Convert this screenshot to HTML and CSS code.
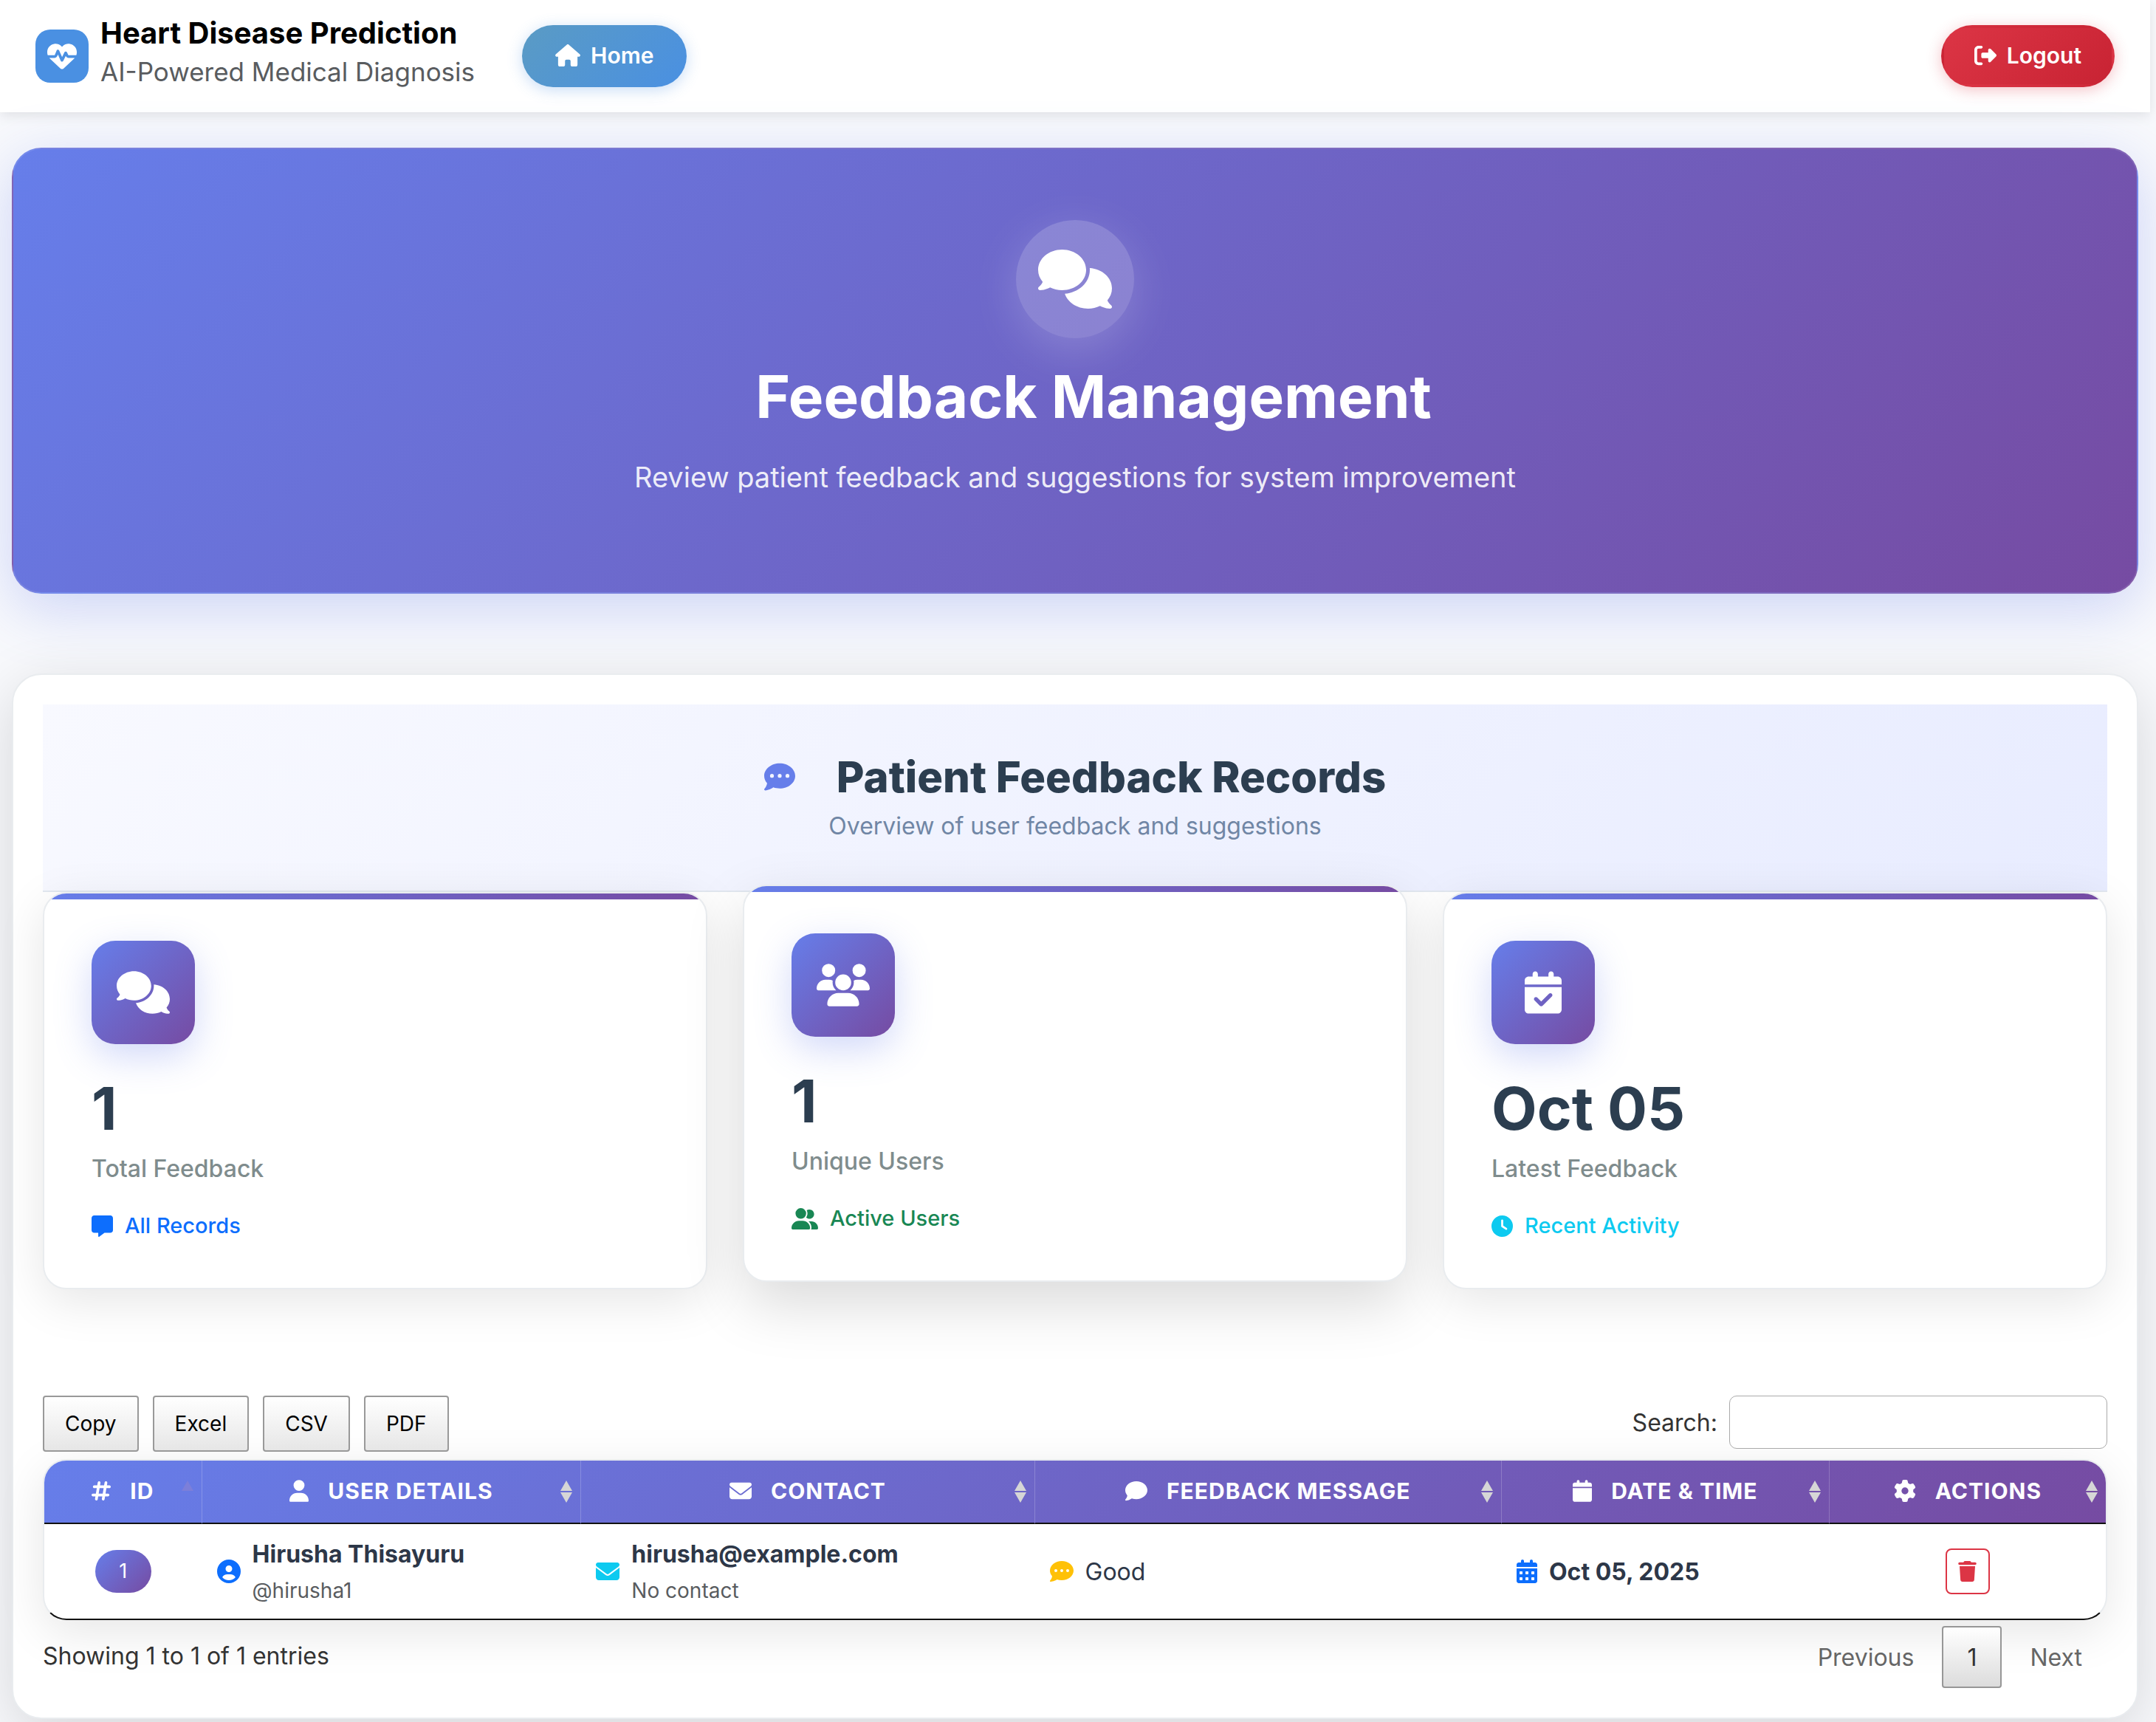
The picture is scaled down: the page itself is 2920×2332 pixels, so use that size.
FILE: index.html
```html
<!DOCTYPE html>
<html lang="en">
<head>
<meta charset="utf-8">
<meta name="viewport" content="width=device-width, initial-scale=1">
<title>Feedback Management</title>
<link rel="stylesheet" href="styles.css">
</head>
<body>
<svg class="sprite" aria-hidden="true">
  <symbol id="i-heart" viewBox="0 0 512 512"><path d="M228.3 469.1L47.6 300.4c-4.2-3.9-8.2-8.1-11.9-12.4h87c22.6 0 43-13.6 51.7-34.5l10.5-25.2 49.3 109.5c3.8 8.5 12.1 14 21.4 14.1s17.8-5 22-13.3L320 253.7l1.7 3.4c9.5 19 28.9 31 50.1 31H476.3c-3.7 4.3-7.7 8.5-11.9 12.4L283.7 469.1c-7.5 7-17.4 10.9-27.7 10.9s-20.2-3.9-27.7-10.9zM503.7 240h-132c-3 0-5.8-1.7-7.2-4.4l-23.2-46.3c-4.1-8.1-12.4-13.3-21.5-13.3s-17.4 5.1-21.5 13.3l-41.4 82.8L205.9 158.2c-3.9-8.7-12.7-14.3-22.2-14.1s-18.1 5.9-21.8 14.8l-31.8 76.3c-1.2 3-4.2 4.9-7.4 4.9H16c-2.6 0-5 .4-7.3 1.1C3 225.2 0 208.2 0 190.9v-5.8c0-69.9 50.5-129.5 119.4-141C165 36.5 211.4 51.4 244 84l12 12 12-12c32.6-32.6 79-47.5 124.6-39.9C461.5 55.6 512 115.2 512 185.1v5.8c0 16.9-2.8 33.5-8.3 49.1z"/></symbol>
  <symbol id="i-home" viewBox="0 0 576 512"><path d="M575.8 255.5c0 18-15 32.1-32 32.1h-32l.7 160.2c0 2.7-.2 5.4-.5 8.1V472c0 22.1-17.9 40-40 40H456c-1.1 0-2.2 0-3.3-.1c-1.4 .1-2.8 .1-4.2 .1H416 392c-22.1 0-40-17.9-40-40V448 384c0-17.7-14.3-32-32-32H256c-17.7 0-32 14.3-32 32v64 24c0 22.1-17.9 40-40 40H160 128.1c-1.5 0-3-.1-4.5-.2c-1.2 .1-2.4 .2-3.6 .2H104c-22.1 0-40-17.9-40-40V360c0-.9 0-1.9 .1-2.8V287.6H32c-18 0-32-14-32-32.1c0-9 3-17 10-24L266.4 8c7-7 15-8 22-8s15 2 21 7L564.8 231.5c8 7 12 15 11 24z"/></symbol>
  <symbol id="i-logout" viewBox="0 0 512 512"><path d="M377.9 105.9L500.7 228.7c7.2 7.2 11.3 17.1 11.3 27.3s-4.1 20.1-11.3 27.3L377.9 406.1c-6.4 6.4-15 9.9-24 9.9c-18.7 0-33.9-15.2-33.9-33.9l0-62.1-128 0c-17.7 0-32-14.3-32-32l0-64c0-17.7 14.3-32 32-32l128 0 0-62.1c0-18.7 15.2-33.9 33.9-33.9c9 0 17.6 3.6 24 9.9zM160 96L96 96c-17.7 0-32 14.3-32 32l0 256c0 17.7 14.3 32 32 32l64 0c17.7 0 32 14.3 32 32s-14.3 32-32 32l-64 0c-53 0-96-43-96-96L0 128C0 75 43 32 96 32l64 0c17.7 0 32 14.3 32 32s-14.3 32-32 32z"/></symbol>
  <symbol id="i-comments" viewBox="0 0 640 512"><path d="M208 352c114.9 0 208-78.8 208-176S322.9 0 208 0S0 78.8 0 176c0 38.6 14.7 74.3 39.6 103.4c-3.5 9.4-8.7 17.7-14.2 24.7c-4.8 6.2-9.7 11-13.3 14.3c-1.8 1.6-3.3 2.9-4.3 3.7c-.5 .4-.9 .7-1.1 .8l-.2 .2C1 327.2-1.4 334.4 .8 340.9S9.1 352 16 352c21.8 0 43.8-5.6 62.1-12.5c9.2-3.5 17.8-7.4 25.2-11.4C134.1 343.3 169.8 352 208 352zM448 176c0 112.3-99.1 196.9-216.5 207C255.8 457.4 336.4 512 432 512c38.2 0 73.9-8.7 104.7-23.9c7.5 4 16 7.9 25.2 11.4c18.3 6.9 40.3 12.5 62.1 12.5c6.9 0 13.1-4.5 15.2-11.1c2.1-6.6-.2-13.8-5.8-17.9l-.2-.2c-.2-.2-.6-.4-1.1-.8c-1-.8-2.5-2-4.3-3.7c-3.6-3.3-8.5-8.1-13.3-14.3c-5.5-7-10.7-15.4-14.2-24.7c24.9-29 39.6-64.7 39.6-103.4c0-92.8-84.9-168.9-192.6-175.5c.4 5.1 .6 10.3 .6 15.5z"/></symbol>
  <symbol id="i-dots" viewBox="0 0 512 512"><path d="M256 448c141.4 0 256-93.1 256-208S397.4 32 256 32S0 125.1 0 240c0 45.1 17.7 86.8 47.7 120.9c-1.9 24.5-11.4 46.3-21.4 62.9c-5.5 9.2-11.1 16.6-15.2 21.6c-2.1 2.5-3.7 4.4-4.9 5.7c-.6 .6-1 1.1-1.3 1.4l-.3 .3c-4.6 4.6-5.9 11.4-3.4 17.4c2.5 6 8.3 9.9 14.8 9.9c28.7 0 57.6-8.9 81.6-19.3c22.9-10 42.4-21.9 54.3-30.6c31.8 11.5 67 17.9 104.1 17.9zM128 208a32 32 0 1 1 0 64 32 32 0 1 1 0-64zm128 0a32 32 0 1 1 0 64 32 32 0 1 1 0-64zm96 32a32 32 0 1 1 64 0 32 32 0 1 1 -64 0z"/></symbol>
  <symbol id="i-comment" viewBox="0 0 512 512"><path d="M256 448c141.4 0 256-93.1 256-208S397.4 32 256 32S0 125.1 0 240c0 45.1 17.7 86.8 47.7 120.9c-1.9 24.5-11.4 46.3-21.4 62.9c-5.5 9.2-11.1 16.6-15.2 21.6c-2.1 2.5-3.7 4.4-4.9 5.7c-.6 .6-1 1.1-1.3 1.4l-.3 .3c-4.6 4.6-5.9 11.4-3.4 17.4c2.5 6 8.3 9.9 14.8 9.9c28.7 0 57.6-8.9 81.6-19.3c22.9-10 42.4-21.9 54.3-30.6c31.8 11.5 67 17.9 104.1 17.9z"/></symbol>
  <symbol id="i-users" viewBox="0 0 640 512"><path d="M144 0a80 80 0 1 1 0 160A80 80 0 1 1 144 0zM512 0a80 80 0 1 1 0 160A80 80 0 1 1 512 0zM0 298.7C0 239.8 47.8 192 106.7 192h42.7c15.9 0 31 3.5 44.6 9.7c-1.3 7.2-1.9 14.7-1.9 22.3c0 38.2 16.8 72.5 43.3 96c-.2 0-.4 0-.7 0H21.3C9.6 320 0 310.4 0 298.7zM405.3 320c-.2 0-.4 0-.7 0c26.6-23.5 43.3-57.8 43.3-96c0-7.6-.7-15-1.9-22.3c13.6-6.3 28.7-9.7 44.6-9.7h42.7C592.2 192 640 239.8 640 298.7c0 11.8-9.6 21.3-21.3 21.3H405.3zM224 224a96 96 0 1 1 192 0 96 96 0 1 1 -192 0zM128 485.3C128 411.7 187.7 352 261.3 352H378.7C452.3 352 512 411.7 512 485.3c0 14.7-11.9 26.7-26.7 26.7H154.7c-14.7 0-26.7-11.9-26.7-26.7z"/></symbol>
  <symbol id="i-calcheck" viewBox="0 0 448 512"><path d="M128 0c17.7 0 32 14.3 32 32V64H288V32c0-17.7 14.3-32 32-32s32 14.3 32 32V64h48c26.5 0 48 21.5 48 48v48H0V112C0 85.5 21.5 64 48 64H96V32c0-17.7 14.3-32 32-32zM0 192H448V464c0 26.5-21.5 48-48 48H48c-26.5 0-48-21.5-48-48V192zM329 305c9.4-9.4 9.4-24.6 0-33.9s-24.6-9.4-33.9 0l-95 95-47-47c-9.4-9.4-24.6-9.4-33.9 0s-9.4 24.6 0 33.9l64 64c9.4 9.4 24.6 9.4 33.9 0L329 305z"/></symbol>
  <symbol id="i-message" viewBox="0 0 512 512"><path d="M64 0C28.7 0 0 28.7 0 64V352c0 35.3 28.7 64 64 64h96v80c0 6.1 3.4 11.6 8.8 14.3s11.9 2.1 16.8-1.5L309.3 416H448c35.3 0 64-28.7 64-64V64c0-35.3-28.7-64-64-64H64z"/></symbol>
  <symbol id="i-group" viewBox="0 0 640 512"><path d="M96 128a128 128 0 1 1 256 0A128 128 0 1 1 96 128zM0 482.3C0 383.8 79.8 304 178.3 304h91.4C368.2 304 448 383.8 448 482.3c0 16.4-13.3 29.7-29.7 29.7H29.7C13.3 512 0 498.7 0 482.3zM609.3 512H471.4c5.4-9.4 8.6-20.3 8.6-32v-8c0-60.7-27.1-115.2-69.8-151.8c2.4-.1 4.7-.2 7.1-.2h61.4C567.8 320 640 392.2 640 481.3c0 17-13.8 30.7-30.7 30.7zM432 256c-31 0-59-12.6-79.3-32.9C372.4 196.5 384 163.6 384 128c0-26.8-6.6-52.1-18.3-74.3C384.3 40.1 407.2 32 432 32c61.9 0 112 50.1 112 112s-50.1 112-112 112z"/></symbol>
  <symbol id="i-clock" viewBox="0 0 512 512"><path d="M256 0a256 256 0 1 1 0 512A256 256 0 1 1 256 0zM232 120V256c0 8 4 15.5 10.7 20l96 64c11 7.4 25.9 4.4 33.3-6.7s4.4-25.9-6.7-33.3L280 243.2V120c0-13.3-10.7-24-24-24s-24 10.7-24 24z"/></symbol>
  <symbol id="i-hash" viewBox="0 0 448 512"><path d="M181.3 32.4c17.4 2.9 29.2 19.4 26.3 36.8L197.8 128h95.1l11.5-69.3c2.9-17.4 19.4-29.2 36.8-26.3s29.2 19.4 26.3 36.8L357.8 128H416c17.7 0 32 14.3 32 32s-14.3 32-32 32H347.1L325.8 320H384c17.7 0 32 14.3 32 32s-14.3 32-32 32H315.1l-11.5 69.3c-2.9 17.4-19.4 29.2-36.8 26.3s-29.2-19.4-26.3-36.8l9.8-58.7H155.1l-11.5 69.3c-2.9 17.4-19.4 29.2-36.8 26.3s-29.2-19.4-26.3-36.8L90.2 384H32c-17.7 0-32-14.3-32-32s14.3-32 32-32h68.9l21.3-128H64c-17.7 0-32-14.3-32-32s14.3-32 32-32h68.9l11.5-69.3c2.9-17.4 19.4-29.2 36.8-26.3zM187.1 192L165.8 320h95.1l21.3-128H187.1z"/></symbol>
  <symbol id="i-user" viewBox="0 0 448 512"><path d="M224 256A128 128 0 1 0 224 0a128 128 0 1 0 0 256zm-45.7 48C79.8 304 0 383.8 0 482.3C0 498.7 13.3 512 29.7 512H418.3c16.4 0 29.7-13.3 29.7-29.7C448 383.8 368.2 304 269.7 304H178.3z"/></symbol>
  <symbol id="i-envelope" viewBox="0 0 512 512"><path d="M48 64C21.5 64 0 85.5 0 112c0 15.1 7.1 29.3 19.2 38.4L236.8 313.6c11.4 8.5 27 8.5 38.4 0L492.8 150.4c12.1-9.1 19.2-23.3 19.2-38.4c0-26.5-21.5-48-48-48H48zM0 176V384c0 35.3 28.7 64 64 64H448c35.3 0 64-28.7 64-64V176L294.4 339.2c-22.8 17.1-54 17.1-76.8 0L0 176z"/></symbol>
  <symbol id="i-calendar" viewBox="0 0 448 512"><path d="M96 32V64H48C21.5 64 0 85.5 0 112v48H448V112c0-26.5-21.5-48-48-48H352V32c0-17.7-14.3-32-32-32s-32 14.3-32 32V64H160V32c0-17.7-14.3-32-32-32S96 14.3 96 32zM448 192H0V464c0 26.5 21.5 48 48 48H400c26.5 0 48-21.5 48-48V192z"/></symbol>
  <symbol id="i-gear" viewBox="0 0 512 512"><path d="M495.9 166.6c3.2 8.7 .5 18.4-6.4 24.6l-43.3 39.4c1.1 8.3 1.7 16.8 1.7 25.4s-.6 17.1-1.7 25.4l43.3 39.4c6.9 6.2 9.6 15.9 6.4 24.6c-4.4 11.9-9.7 23.3-15.8 34.3l-4.7 8.1c-6.6 11-14 21.4-22.1 31.2c-5.9 7.2-15.7 9.6-24.5 6.8l-55.7-17.7c-13.4 10.3-28.2 18.9-44 25.4l-12.5 57.1c-2 9.1-9 16.3-18.2 17.8c-13.8 2.3-28 3.5-42.5 3.5s-28.7-1.2-42.5-3.5c-9.2-1.5-16.2-8.7-18.2-17.8l-12.5-57.1c-15.8-6.5-30.6-15.1-44-25.4L83.1 425.9c-8.8 2.8-18.6 .3-24.5-6.8c-8.1-9.8-15.5-20.2-22.1-31.2l-4.7-8.1c-6.1-11-11.4-22.4-15.8-34.3c-3.2-8.7-.5-18.4 6.4-24.6l43.3-39.4C64.6 273.1 64 264.6 64 256s.6-17.1 1.7-25.4L22.4 191.2c-6.9-6.2-9.6-15.9-6.4-24.6c4.4-11.9 9.7-23.3 15.8-34.3l4.7-8.1c6.6-11 14-21.4 22.1-31.2c5.9-7.2 15.7-9.6 24.5-6.8l55.7 17.7c13.4-10.3 28.2-18.9 44-25.4l12.5-57.1c2-9.1 9-16.3 18.2-17.8C227.3 1.2 241.5 0 256 0s28.7 1.2 42.5 3.5c9.2 1.5 16.2 8.7 18.2 17.8l12.5 57.1c15.8 6.5 30.6 15.1 44 25.4l55.7-17.7c8.8-2.8 18.6-.3 24.5 6.8c8.1 9.8 15.5 20.2 22.1 31.2l4.7 8.1c6.1 11 11.4 22.4 15.8 34.3zM256 336a80 80 0 1 0 0-160 80 80 0 1 0 0 160z"/></symbol>
  <symbol id="i-usercircle" viewBox="0 0 512 512"><path d="M399 384.2C376.9 345.8 335.4 320 288 320H224c-47.4 0-88.9 25.8-111 64.2c35.2 39.2 86.2 63.8 143 63.8s107.8-24.7 143-63.8zM0 256a256 256 0 1 1 512 0A256 256 0 1 1 0 256zm256 16a72 72 0 1 0 0-144 72 72 0 1 0 0 144z"/></symbol>
  <symbol id="i-caldays" viewBox="0 0 448 512"><path d="M128 0c17.7 0 32 14.3 32 32V64H288V32c0-17.7 14.3-32 32-32s32 14.3 32 32V64h48c26.5 0 48 21.5 48 48v48H0V112C0 85.5 21.5 64 48 64H96V32c0-17.7 14.3-32 32-32zM0 192H448V464c0 26.5-21.5 48-48 48H48c-26.5 0-48-21.5-48-48V192zm64 80v32c0 8.8 7.2 16 16 16h32c8.8 0 16-7.2 16-16V272c0-8.8-7.2-16-16-16H80c-8.8 0-16 7.2-16 16zm128 0v32c0 8.8 7.2 16 16 16h32c8.8 0 16-7.2 16-16V272c0-8.8-7.2-16-16-16H208c-8.8 0-16 7.2-16 16zm144-16c-8.8 0-16 7.2-16 16v32c0 8.8 7.2 16 16 16h32c8.8 0 16-7.2 16-16V272c0-8.8-7.2-16-16-16H336zM64 400v32c0 8.8 7.2 16 16 16h32c8.8 0 16-7.2 16-16V400c0-8.8-7.2-16-16-16H80c-8.8 0-16 7.2-16 16zm144-16c-8.8 0-16 7.2-16 16v32c0 8.8 7.2 16 16 16h32c8.8 0 16-7.2 16-16V400c0-8.8-7.2-16-16-16H208zm112 16v32c0 8.8 7.2 16 16 16h32c8.8 0 16-7.2 16-16V400c0-8.8-7.2-16-16-16H336c-8.8 0-16 7.2-16 16z"/></symbol>
  <symbol id="i-trash" viewBox="0 0 448 512"><path d="M135.2 17.7L128 32H32C14.3 32 0 46.3 0 64S14.3 96 32 96H416c17.7 0 32-14.3 32-32s-14.3-32-32-32H320l-7.2-14.3C307.4 6.8 296.3 0 284.2 0H163.8c-12.1 0-23.2 6.8-28.6 17.7zM416 128H32L53.2 467c1.6 25.3 22.6 45 47.9 45H346.9c25.3 0 46.3-19.7 47.9-45L416 128z"/></symbol>
  <symbol id="i-sort" viewBox="0 0 16 30"><path d="M8 0l8 14H0zM0 16h16L8 30z"/></symbol>
  <symbol id="i-asc" viewBox="0 0 16 30"><path d="M8 0l8 14H0z"/></symbol>
</svg>

<header class="navbar">
  <div class="brand">
    <span class="brand-logo"><svg class="icon icon-brand"><use href="#i-heart"/></svg></span>
    <div class="brand-text">
      <div class="brand-title">Heart Disease Prediction</div>
      <div class="brand-sub">AI-Powered Medical Diagnosis</div>
    </div>
  </div>
  <a class="pill pill-home" href="#"><svg class="icon icon-home"><use href="#i-home"/></svg>Home</a>
  <a class="pill pill-logout" href="#"><svg class="icon icon-logout"><use href="#i-logout"/></svg>Logout</a>
</header>

<main class="page">
  <section class="hero">
    <div class="hero-icon"><svg class="icon icon-hero"><use href="#i-comments"/></svg></div>
    <h1 class="hero-title">Feedback Management</h1>
    <p class="hero-sub">Review patient feedback and suggestions for system improvement</p>
  </section>

  <section class="panel">
    <div class="panel-head">
      <h2 class="panel-title"><svg class="icon icon-title"><use href="#i-dots"/></svg>Patient Feedback Records</h2>
      <p class="panel-sub">Overview of user feedback and suggestions</p>
    </div>

    <div class="stats">
      <article class="stat">
        <div class="stat-icon"><svg class="icon icon-wide"><use href="#i-comments"/></svg></div>
        <div class="stat-value">1</div>
        <div class="stat-label">Total Feedback</div>
        <div class="stat-note note-blue"><svg class="icon icon-note"><use href="#i-message"/></svg>All Records</div>
      </article>
      <article class="stat stat-raised">
        <div class="stat-icon"><svg class="icon icon-wide"><use href="#i-users"/></svg></div>
        <div class="stat-value">1</div>
        <div class="stat-label">Unique Users</div>
        <div class="stat-note note-green"><svg class="icon icon-note-wide"><use href="#i-group"/></svg>Active Users</div>
      </article>
      <article class="stat">
        <div class="stat-icon"><svg class="icon icon-tall"><use href="#i-calcheck"/></svg></div>
        <div class="stat-value">Oct 05</div>
        <div class="stat-label">Latest Feedback</div>
        <div class="stat-note note-cyan"><svg class="icon icon-note"><use href="#i-clock"/></svg>Recent Activity</div>
      </article>
    </div>

    <div class="toolbar">
      <div class="exports">
        <button type="button" class="export">Copy</button>
        <button type="button" class="export">Excel</button>
        <button type="button" class="export">CSV</button>
        <button type="button" class="export">PDF</button>
      </div>
      <div class="search">
        <label class="search-label" for="search">Search:</label>
        <input class="search-input" id="search" type="search">
      </div>
    </div>

    <div class="table-box">
      <table class="records">
        <colgroup><col class="c-id"><col class="c-user"><col class="c-contact"><col class="c-message"><col class="c-date"><col class="c-actions"></colgroup>
        <thead>
          <tr>
            <th scope="col"><svg class="icon icon-th"><use href="#i-hash"/></svg>ID<svg class="sort sort-active"><use href="#i-asc"/></svg></th>
            <th scope="col"><svg class="icon icon-th"><use href="#i-user"/></svg>USER DETAILS<svg class="sort"><use href="#i-sort"/></svg></th>
            <th scope="col"><svg class="icon icon-th-wide"><use href="#i-envelope"/></svg>CONTACT<svg class="sort"><use href="#i-sort"/></svg></th>
            <th scope="col"><svg class="icon icon-th-wide"><use href="#i-comment"/></svg>FEEDBACK MESSAGE<svg class="sort"><use href="#i-sort"/></svg></th>
            <th scope="col"><svg class="icon icon-th"><use href="#i-calendar"/></svg>DATE &amp; TIME<svg class="sort"><use href="#i-sort"/></svg></th>
            <th scope="col"><svg class="icon icon-th-wide"><use href="#i-gear"/></svg>ACTIONS<svg class="sort"><use href="#i-sort"/></svg></th>
          </tr>
        </thead>
        <tbody>
          <tr>
            <td class="center"><span class="badge">1</span></td>
            <td><div class="cell"><svg class="icon icon-td blue"><use href="#i-usercircle"/></svg><div class="cell-text"><div class="strong">Hirusha Thisayuru</div><div><small>@hirusha1</small></div></div></div></td>
            <td><div class="cell"><svg class="icon icon-td cyan"><use href="#i-envelope"/></svg><div class="cell-text"><div class="strong">hirusha@example.com</div><div><small>No contact</small></div></div></div></td>
            <td><div class="cell"><svg class="icon icon-td yellow"><use href="#i-dots"/></svg><span class="cell-text">Good</span></div></td>
            <td><div class="cell"><svg class="icon icon-td-narrow blue"><use href="#i-caldays"/></svg><span class="cell-text strong">Oct 05, 2025</span></div></td>
            <td class="center"><button type="button" class="delete" aria-label="Delete"><svg class="icon icon-trash"><use href="#i-trash"/></svg></button></td>
          </tr>
        </tbody>
      </table>
    </div>

    <div class="table-foot">
      <div class="info">Showing 1 to 1 of 1 entries</div>
      <nav class="pager" aria-label="Pages">
        <button type="button" class="page-btn">Previous</button>
        <button type="button" class="page-btn current">1</button>
        <button type="button" class="page-btn">Next</button>
      </nav>
    </div>
  </section>
</main>
</body>
</html>
```
FILE: styles.css
```css
* { box-sizing: border-box; }

body {
  margin: 0;
  padding-right: 8px;
  background: #f8f9fc;
  font-family: Inter, "Liberation Sans", sans-serif;
  font-size: 32px;
  line-height: 48px;
  color: #2d3748;
}

h1, h2, p { margin: 0; }
button, input { font-family: inherit; }

.sprite { display: none; }
.icon { display: block; flex: none; fill: currentColor; }

/* Top bar */
.navbar {
  display: flex;
  align-items: center;
  height: 152px;
  padding: 0 48px;
  background: #fff;
  box-shadow: 0 4px 16px rgba(0, 0, 0, 0.1);
}
.brand { display: flex; align-items: center; gap: 16px; margin-right: 64px; }
.brand-logo {
  display: grid;
  place-items: center;
  width: 72px;
  height: 72px;
  border-radius: 20px;
  background: #4a90e2;
  color: #fff;
}
.icon-brand { width: 40px; height: 40px; }
.brand-text { padding-bottom: 8px; }
.brand-title { font-size: 40px; line-height: 50px; font-weight: 700; color: #000; }
.brand-sub { font-size: 35px; line-height: 54px; color: #595c5f; }

.pill {
  display: flex;
  align-items: center;
  gap: 14px;
  height: 84px;
  padding: 0 41px 2px;
  border: 4px solid transparent;
  border-radius: 42px;
  color: #fff;
  font-size: 30px;
  font-weight: 600;
  text-decoration: none;
}
.pill-home {
  background: linear-gradient(135deg, #5a9bc4, #4a90e2) border-box;
  box-shadow: 0 4px 20px rgba(74, 144, 226, 0.3);
}
.pill-logout {
  margin-left: auto;
  background-image: linear-gradient(135deg, #dc3545, #c82333);
  box-shadow: 0 4px 20px rgba(220, 53, 69, 0.3);
}
.icon-home { width: 34px; height: 30px; }
.icon-logout { width: 30px; height: 30px; }

.page { padding: 48px 16px 4px; }

/* Banner */
.hero {
  display: flex;
  flex-direction: column;
  align-items: center;
  height: 604px;
  padding-top: 96px;
  border: 2px solid rgba(255, 255, 255, 0.1);
  border-radius: 40px;
  background-image: linear-gradient(135deg, #667eea, #764ba2);
  box-shadow: 0 20px 80px rgba(102, 126, 234, 0.3);
  color: #fff;
}
.hero-icon {
  display: grid;
  place-items: center;
  width: 160px;
  height: 160px;
  border-radius: 50%;
  background: rgba(255, 255, 255, 0.2);
  box-shadow: 0 16px 64px rgba(255, 255, 255, 0.2);
}
.icon-hero { width: 100px; height: 80px; }
.hero-title {
  margin-top: 31px;
  padding-left: 50px;
  font-size: 80px;
  line-height: 96px;
  font-weight: 700;
}
.hero-sub {
  margin-top: 32px;
  font-size: 38px;
  line-height: 58px;
  color: rgba(255, 255, 255, 0.9);
}

/* Records panel */
.panel {
  margin-top: 108px;
  padding: 40px;
  border: 2px solid #e9ecef;
  border-radius: 40px;
  background: #fff;
  box-shadow: 0 20px 80px rgba(0, 0, 0, 0.14);
}
.panel-head {
  display: flex;
  flex-direction: column;
  align-items: center;
  height: 254px;
  padding-top: 64px;
  border-bottom: 2px solid #e2e8f0;
  background: linear-gradient(135deg, #f8f9ff, #e8ecff);
}
.panel-title {
  display: flex;
  align-items: center;
  gap: 56px;
  font-size: 58px;
  line-height: 68px;
  font-weight: 800;
  color: #2c3e50;
}
.icon-title { width: 42px; height: 42px; color: #667eea; }
.panel-sub { margin-top: 9px; color: #7086a5; }

.stats {
  display: grid;
  grid-template-columns: repeat(3, 1fr);
  gap: 48px;
}
.stat {
  position: relative;
  overflow: hidden;
  padding: 64px;
  border: 2px solid #e9ecef;
  border-radius: 32px;
  background: #fff;
  box-shadow: 0 16px 64px rgba(0, 0, 0, 0.1);
}
.stat::before {
  content: "";
  position: absolute;
  inset: 0 0 auto;
  height: 8px;
  background: linear-gradient(90deg, #667eea, #764ba2);
}
.stat-raised {
  transform: translateY(-10px);
  box-shadow: 0 30px 80px rgba(0, 0, 0, 0.15);
}
.stat-icon {
  display: grid;
  place-items: center;
  width: 140px;
  height: 140px;
  border-radius: 32px;
  background: linear-gradient(135deg, #667eea, #764ba2);
  box-shadow: 0 16px 50px rgba(102, 126, 234, 0.3);
  color: #fff;
}
.icon-wide { width: 72px; height: 58px; }
.icon-tall { width: 50px; height: 58px; }
.stat-value {
  margin-top: 47px;
  font-size: 80px;
  line-height: 80px;
  font-weight: 700;
  color: #2c3e50;
}
.stat-label { margin-top: 18px; font-weight: 500; color: #7f8c8d; }
.stat-note {
  display: flex;
  align-items: center;
  gap: 16px;
  margin-top: 33px;
  font-size: 29px;
  line-height: 40px;
  font-weight: 500;
}
.icon-note { width: 29px; height: 29px; }
.icon-note-wide { width: 36px; height: 29px; }
.note-blue, .blue { color: #0d6efd; }
.note-green { color: #198754; }
.note-cyan, .cyan { color: #0dcaf0; }
.yellow { color: #ffc107; }

/* Export buttons and search */
.toolbar {
  display: flex;
  justify-content: space-between;
  align-items: flex-start;
  margin-top: 144px;
  margin-bottom: 10px;
}
.exports { display: flex; gap: 19px; }
.export {
  height: 76px;
  padding: 0 28px;
  border: 2px solid #999;
  border-radius: 4px;
  background: linear-gradient(#fff, #e6e6e6);
  color: #000;
  font-size: 28px;
}
.search { display: flex; align-items: center; gap: 16px; color: #333; }
.search-label { padding-top: 2px; }
.search-input {
  width: 512px;
  height: 72px;
  padding: 0 16px;
  border: 1px solid #aaa;
  border-radius: 10px;
  background: #fff;
  font-size: 32px;
}

/* Table */
.table-box {
  overflow: hidden;
  border: 2px solid #e9ecef;
  border-bottom-color: #111;
  border-radius: 32px;
  background: #fff;
  box-shadow: 0 16px 64px rgba(0, 0, 0, 0.1);
}
.records { width: 100%; table-layout: fixed; border-collapse: separate; border-spacing: 0; }
.c-id { width: 7.65%; }
.c-user { width: 18.4%; }
.c-contact { width: 22%; }
.c-message { width: 22.65%; }
.c-date { width: 15.9%; }
.records thead { background: linear-gradient(135deg, #667eea, #764ba2); }
.records th {
  position: relative;
  height: 86px;
  padding: 0 0 2px;
  border-right: 1px solid rgba(255, 255, 255, 0.2);
  border-bottom: 2px solid #111;
  color: #fff;
  font-size: 30px;
  font-weight: 700;
  letter-spacing: 1px;
  text-align: center;
}
.records th:last-child { border-right: 0; }
.icon-th, .icon-th-wide { display: inline-block; height: 30px; margin-right: 26px; vertical-align: -4px; }
.icon-th { width: 26px; }
.icon-th-wide { width: 30px; }
.sort {
  position: absolute;
  top: 27px;
  right: 11px;
  width: 16px;
  height: 30px;
  fill: #d6d6d6;
}
.sort-active { fill: #7c7fd9; }
.records td { height: 128px; padding: 0 20px; color: #2d3748; }
.records .center { text-align: center; }
.cell { display: flex; align-items: center; gap: 16px; }
.cell-text { padding-top: 2px; }
.strong { font-weight: 700; }
.cell small { font-size: 28px; color: #595c5f; }
.icon-td { width: 32px; height: 32px; }
.icon-td-narrow { width: 28px; height: 32px; }
.badge {
  display: inline-block;
  width: 76px;
  border-radius: 29px;
  background: linear-gradient(135deg, #667eea, #764ba2);
  color: #fff;
  font-size: 27px;
  line-height: 58px;
  vertical-align: middle;
}
.delete {
  display: inline-grid;
  place-items: center;
  width: 60px;
  height: 62px;
  padding: 0;
  border: 2px solid #dc3545;
  border-radius: 8px;
  background: #fff;
  color: #dc3545;
  vertical-align: middle;
}
.icon-trash { width: 25px; height: 28px; }

/* Table footer */
.table-foot { display: flex; justify-content: space-between; color: #333; }
.info { padding-top: 25px; }
.pager { display: flex; gap: 4px; padding-top: 8px; }
.page-btn {
  height: 84px;
  padding: 0 32px;
  border: 2px solid transparent;
  border-radius: 4px;
  background: none;
  color: #666;
  font-size: 32px;
}
.page-btn.current {
  border-color: #979797;
  background: linear-gradient(#fff, #dcdcdc);
  color: #333;
}
```
